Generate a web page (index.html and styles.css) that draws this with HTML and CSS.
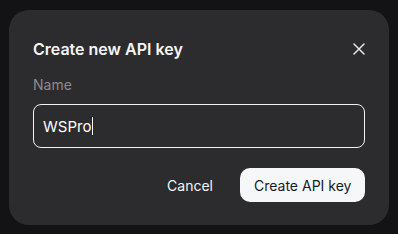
FILE: index.html
```html
<!DOCTYPE html>
<html lang="en">
<head>
    <meta charset="UTF-8">
    <meta name="viewport" content="width=device-width, initial-scale=1">
    <title>Create new API key</title>
    <link rel="stylesheet" href="styles.css">
</head>
<body>
    <!-- === DIALOG === -->
    <div class="dialog" role="dialog" aria-labelledby="dialogTitle">
        <div class="dialog-header">
            <h2 id="dialogTitle" class="dialog-title">Create new API key</h2>
            <button class="close-btn" aria-label="Close">
                <svg width="12" height="12" viewBox="0 0 12 12">
                    <path d="M1 1L11 11M11 1L1 11" stroke="currentColor" stroke-width="1.5" stroke-linecap="round"/>
                </svg>
            </button>
        </div>

        <label class="field-label" for="keyName">Name</label>
        <div id="keyName" class="input">WSPro<span class="caret"></span></div>

        <div class="dialog-actions">
            <button class="btn btn-ghost">Cancel</button>
            <button class="btn btn-primary">Create API key</button>
        </div>
    </div>
</body>
</html>
```

FILE: styles.css
```css
/* === BASE STYLES === */
* {
    margin: 0;
    padding: 0;
    box-sizing: border-box;
}

body {
    font-family: Inter, 'Noto Sans', sans-serif;
    background: #131315;
    color: #f5f5f5;
    padding: 10px 9px;
}

/* === DIALOG === */
.dialog {
    width: 380px;
    height: 215px;
    background: #2c2c2e;
    border-radius: 20px;
    padding: 27px 24px 24px;
}

.dialog-header {
    display: flex;
    justify-content: space-between;
    align-items: center;
    height: 24px;
}

.dialog-title {
    font-size: 16px;
    line-height: 24px;
    font-weight: 600;
}

.close-btn {
    background: none;
    border: none;
    color: #e6e6e6;
    width: 12px;
    height: 12px;
    display: flex;
    cursor: pointer;
}

/* === FIELD === */
.field-label {
    display: block;
    margin-top: 14px;
    font-size: 14px;
    line-height: 20px;
    color: #8b8b90;
}

.input {
    margin-top: 9px;
    height: 44px;
    border: 1px solid #f2f2f2;
    border-radius: 8px;
    padding: 0 9px;
    display: flex;
    align-items: center;
    font-size: 15px;
    color: #ffffff;
}

.caret {
    display: inline-block;
    width: 1px;
    height: 18px;
    background: #ffffff;
    margin-left: 1px;
}

/* === ACTIONS === */
.dialog-actions {
    display: flex;
    justify-content: flex-end;
    gap: 13px;
    margin-top: 20px;
}

.btn {
    height: 34px;
    border: none;
    border-radius: 10px;
    font-family: inherit;
    font-size: 14px;
    font-weight: 400;
    white-space: nowrap;
    cursor: pointer;
    padding: 0 14px;
}

.btn-ghost {
    background: none;
    color: #f5f5f5;
}

.btn-primary {
    width: 125px;
    background: #f6f7f9;
    color: #141a2c;
}
```
